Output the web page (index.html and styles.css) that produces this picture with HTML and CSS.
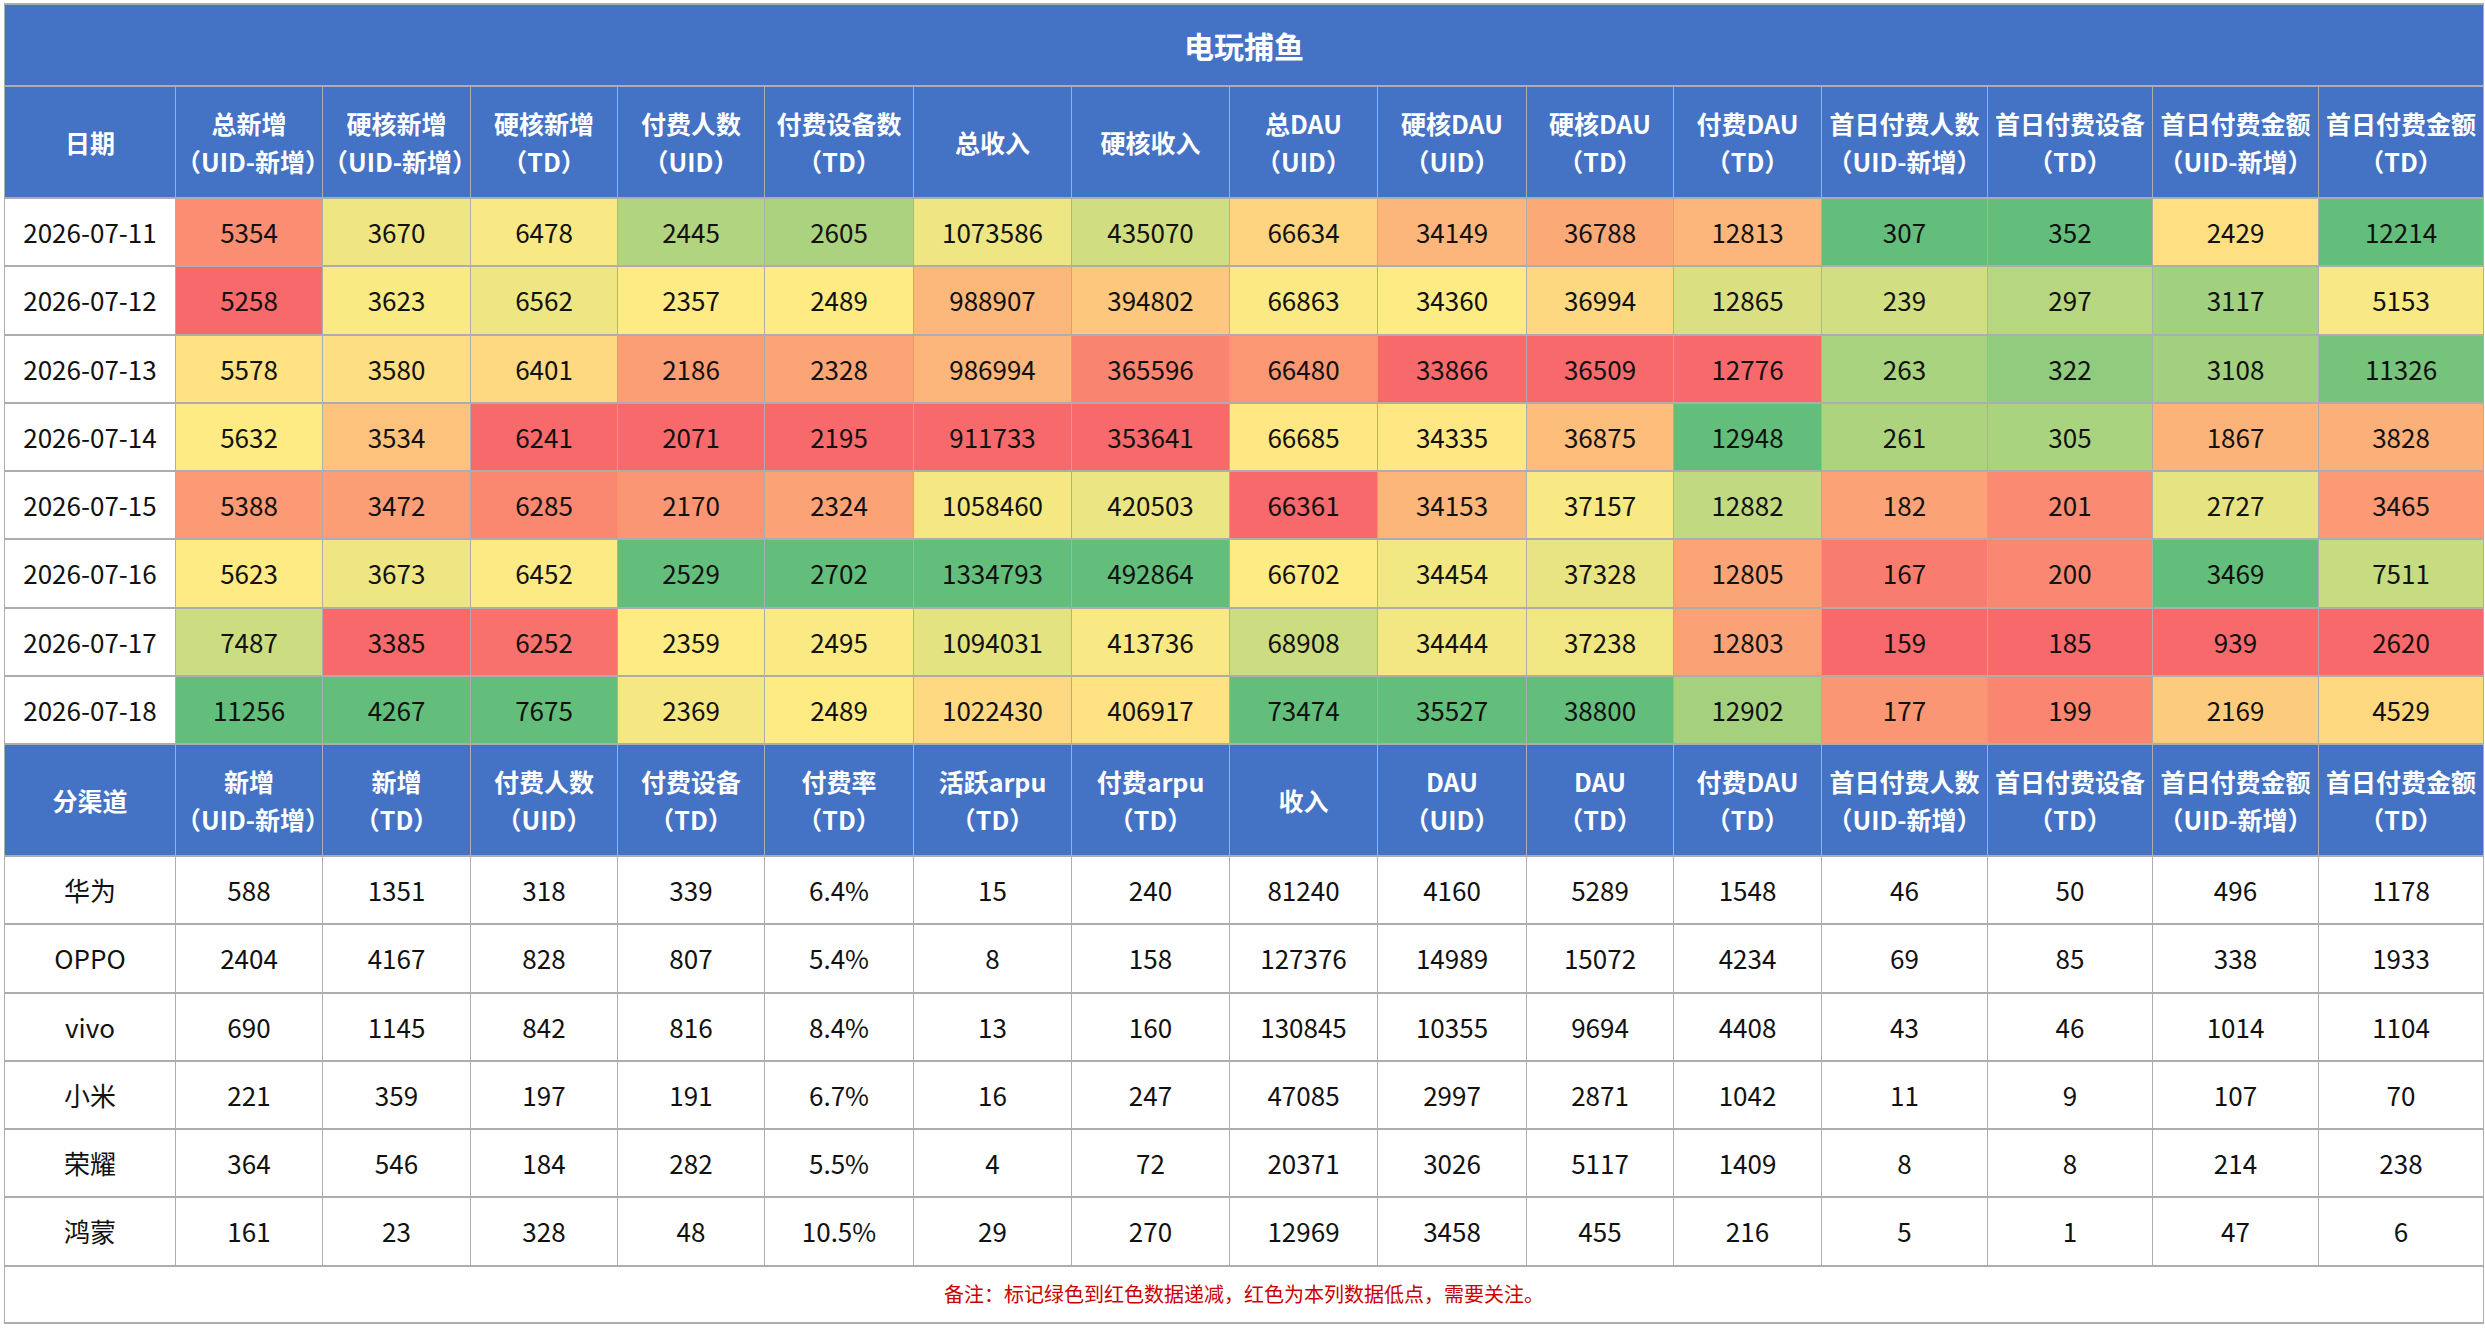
FILE: index.html
```html
<!DOCTYPE html>
<html lang="zh-CN">
<head>
<meta charset="utf-8">
<title>电玩捕鱼</title>
<link rel="stylesheet" href="styles.css">
</head>
<body>
<div class="page">
<table class="report">
<colgroup>
<col class="c-date"><col class="c-a"><col class="c-b"><col class="c-a"><col class="c-a"><col class="c-c"><col class="c-d"><col class="c-d">
<col class="c-b"><col class="c-c"><col class="c-a"><col class="c-b"><col class="c-e"><col class="c-f"><col class="c-e"><col class="c-f">
</colgroup>
<tbody>
<tr class="title-row"><th colspan="16">电玩捕鱼</th></tr>
<tr class="head-row">
<th>日期</th><th>总新增<br>（UID-新增）</th><th>硬核新增<br>（UID-新增）</th><th>硬核新增<br>（TD）</th><th>付费人数<br>（UID）</th><th>付费设备数<br>（TD）</th><th>总收入</th><th>硬核收入</th><th>总DAU<br>（UID）</th><th>硬核DAU<br>（UID）</th><th>硬核DAU<br>（TD）</th><th>付费DAU<br>（TD）</th><th>首日付费人数<br>（UID-新增）</th><th>首日付费设备<br>（TD）</th><th>首日付费金额<br>（UID-新增）</th><th>首日付费金额<br>（TD）</th>
</tr>
</tbody>
<tbody class="heat">
<tr class="data-row"><td>2026-07-11</td><td>5354</td><td>3670</td><td>6478</td><td>2445</td><td>2605</td><td>1073586</td><td>435070</td><td>66634</td><td>34149</td><td>36788</td><td>12813</td><td>307</td><td>352</td><td>2429</td><td>12214</td></tr>
<tr class="data-row"><td>2026-07-12</td><td>5258</td><td>3623</td><td>6562</td><td>2357</td><td>2489</td><td>988907</td><td>394802</td><td>66863</td><td>34360</td><td>36994</td><td>12865</td><td>239</td><td>297</td><td>3117</td><td>5153</td></tr>
<tr class="data-row"><td>2026-07-13</td><td>5578</td><td>3580</td><td>6401</td><td>2186</td><td>2328</td><td>986994</td><td>365596</td><td>66480</td><td>33866</td><td>36509</td><td>12776</td><td>263</td><td>322</td><td>3108</td><td>11326</td></tr>
<tr class="data-row"><td>2026-07-14</td><td>5632</td><td>3534</td><td>6241</td><td>2071</td><td>2195</td><td>911733</td><td>353641</td><td>66685</td><td>34335</td><td>36875</td><td>12948</td><td>261</td><td>305</td><td>1867</td><td>3828</td></tr>
<tr class="data-row"><td>2026-07-15</td><td>5388</td><td>3472</td><td>6285</td><td>2170</td><td>2324</td><td>1058460</td><td>420503</td><td>66361</td><td>34153</td><td>37157</td><td>12882</td><td>182</td><td>201</td><td>2727</td><td>3465</td></tr>
<tr class="data-row"><td>2026-07-16</td><td>5623</td><td>3673</td><td>6452</td><td>2529</td><td>2702</td><td>1334793</td><td>492864</td><td>66702</td><td>34454</td><td>37328</td><td>12805</td><td>167</td><td>200</td><td>3469</td><td>7511</td></tr>
<tr class="data-row"><td>2026-07-17</td><td>7487</td><td>3385</td><td>6252</td><td>2359</td><td>2495</td><td>1094031</td><td>413736</td><td>68908</td><td>34444</td><td>37238</td><td>12803</td><td>159</td><td>185</td><td>939</td><td>2620</td></tr>
<tr class="data-row"><td>2026-07-18</td><td>11256</td><td>4267</td><td>7675</td><td>2369</td><td>2489</td><td>1022430</td><td>406917</td><td>73474</td><td>35527</td><td>38800</td><td>12902</td><td>177</td><td>199</td><td>2169</td><td>4529</td></tr>
</tbody>
<tbody>
<tr class="head-row">
<th>分渠道</th><th>新增<br>（UID-新增）</th><th>新增<br>（TD）</th><th>付费人数<br>（UID）</th><th>付费设备<br>（TD）</th><th>付费率<br>（TD）</th><th>活跃arpu<br>（TD）</th><th>付费arpu<br>（TD）</th><th>收入</th><th>DAU<br>（UID）</th><th>DAU<br>（TD）</th><th>付费DAU<br>（TD）</th><th>首日付费人数<br>（UID-新增）</th><th>首日付费设备<br>（TD）</th><th>首日付费金额<br>（UID-新增）</th><th>首日付费金额<br>（TD）</th>
</tr>
<tr class="data-row"><td>华为</td><td>588</td><td>1351</td><td>318</td><td>339</td><td>6.4%</td><td>15</td><td>240</td><td>81240</td><td>4160</td><td>5289</td><td>1548</td><td>46</td><td>50</td><td>496</td><td>1178</td></tr>
<tr class="data-row"><td>OPPO</td><td>2404</td><td>4167</td><td>828</td><td>807</td><td>5.4%</td><td>8</td><td>158</td><td>127376</td><td>14989</td><td>15072</td><td>4234</td><td>69</td><td>85</td><td>338</td><td>1933</td></tr>
<tr class="data-row"><td>vivo</td><td>690</td><td>1145</td><td>842</td><td>816</td><td>8.4%</td><td>13</td><td>160</td><td>130845</td><td>10355</td><td>9694</td><td>4408</td><td>43</td><td>46</td><td>1014</td><td>1104</td></tr>
<tr class="data-row"><td>小米</td><td>221</td><td>359</td><td>197</td><td>191</td><td>6.7%</td><td>16</td><td>247</td><td>47085</td><td>2997</td><td>2871</td><td>1042</td><td>11</td><td>9</td><td>107</td><td>70</td></tr>
<tr class="data-row"><td>荣耀</td><td>364</td><td>546</td><td>184</td><td>282</td><td>5.5%</td><td>4</td><td>72</td><td>20371</td><td>3026</td><td>5117</td><td>1409</td><td>8</td><td>8</td><td>214</td><td>238</td></tr>
<tr class="data-row"><td>鸿蒙</td><td>161</td><td>23</td><td>328</td><td>48</td><td>10.5%</td><td>29</td><td>270</td><td>12969</td><td>3458</td><td>455</td><td>216</td><td>5</td><td>1</td><td>47</td><td>6</td></tr>
<tr class="note-row"><td colspan="16">备注：标记绿色到红色数据递减，红色为本列数据低点，需要关注。</td></tr>
</tbody>
</table>
</div>
<script src="app.js"></script>
</body>
</html>
```

FILE: styles.css
```css
html, body {
  margin: 0;
  background: #ffffff;
}

body {
  font-family: "Noto Sans CJK SC", "Noto Sans", sans-serif;
  color: #111111;
}

.page {
  padding: 3px 3px 0 4px;
}

.report {
  border-collapse: collapse;
  table-layout: fixed;
  width: 2478px;
}

.c-date { width: 171px; }
.c-a { width: 147px; }
.c-b { width: 148px; }
.c-c { width: 149px; }
.c-d { width: 158px; }
.c-e { width: 166px; }
.c-f { width: 165px; }

.report th,
.report td {
  border-style: solid;
  border-color: #adadad;
  border-width: 2px 1px;
  padding: 0;
  text-align: center;
  vertical-align: middle;
  white-space: nowrap;
  font-size: 26px;
  line-height: 38px;
}

.report th {
  background: #4472c4;
  color: #ffffff;
  font-weight: 700;
  font-size: 25px;
}

.title-row th {
  height: 80px;
  font-size: 30px;
}

.head-row th {
  height: 110px;
}

.data-row td {
  height: 66.25px;
  background: #ffffff;
}

.note-row td {
  height: 55px;
  font-size: 20px;
  color: #cc0000;
}
```

FILE: app.js
```js
(function () {
  var RED = [248, 105, 107];
  var YEL = [255, 235, 132];
  var GRN = [99, 190, 123];

  function mix(a, b, t) {
    return 'rgb(' + a.map(function (v, i) {
      return Math.round(v + (b[i] - v) * t);
    }).join(',') + ')';
  }

  function percentile(sorted, p) {
    var pos = (sorted.length - 1) * p;
    var lo = Math.floor(pos);
    var hi = Math.ceil(pos);
    return sorted[lo] + (sorted[hi] - sorted[lo]) * (pos - lo);
  }

  var rows = document.querySelectorAll('tbody.heat tr');
  var cols = rows[0].cells.length;
  for (var c = 1; c < cols; c++) {
    var vals = [];
    for (var r = 0; r < rows.length; r++) {
      vals.push(parseFloat(rows[r].cells[c].textContent));
    }
    var sorted = vals.slice().sort(function (a, b) { return a - b; });
    var min = sorted[0];
    var max = sorted[sorted.length - 1];
    var mid = percentile(sorted, 0.5);
    for (r = 0; r < rows.length; r++) {
      var v = vals[r];
      var color;
      if (v <= mid) {
        color = mix(RED, YEL, mid === min ? 1 : (v - min) / (mid - min));
      } else {
        color = mix(YEL, GRN, max === mid ? 1 : (v - mid) / (max - mid));
      }
      rows[r].cells[c].style.backgroundColor = color;
    }
  }
})();
```
